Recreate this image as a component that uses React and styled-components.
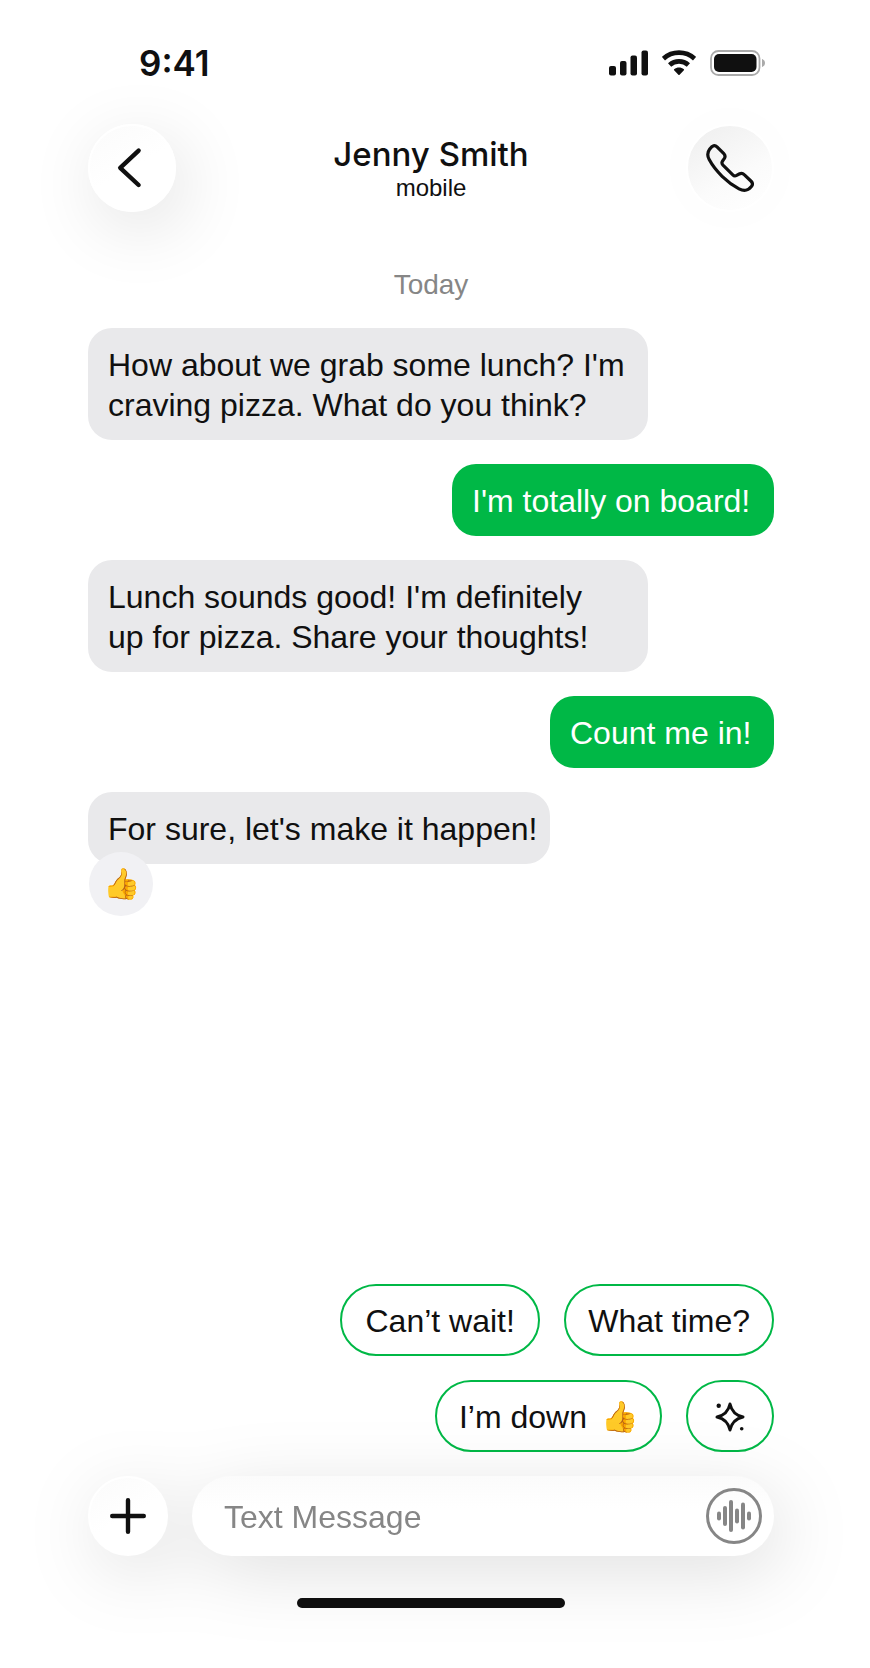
import React from 'react';
import styled, { createGlobalStyle } from 'styled-components';

const ink = '#101010';
const green = '#00b846';
const grey = '#868686';

const GlobalStyle = createGlobalStyle`
  * { box-sizing: border-box; }
  body {
    margin: 0;
    background: #fff;
    color: ${ink};
    font-family: "Liberation Sans", Arial, sans-serif;
    font-size: 32px;
    line-height: 40px;
  }
  button, input { font: inherit; color: inherit; }
  button { padding: 0; border: 0; background: none; cursor: pointer; }
  svg { display: block; }
`;

const Screen = styled.div`
  display: flex;
  flex-direction: column;
  min-height: 100vh;
  padding: 40px 96px 60px 88px;
  overflow: hidden;
`;

const StatusBar = styled.div`
  display: flex;
  align-items: center;
  justify-content: space-between;
  height: 48px;
  padding: 0 8px 2px 51px;
`;

const Time = styled.time`
  font-family: Inter, sans-serif;
  font-size: 35px;
  font-weight: 600;
`;

const StatusIcons = styled.div`
  display: flex;
  align-items: center;
  gap: 14px;
`;

const Header = styled.header`
  display: flex;
  align-items: center;
  justify-content: space-between;
  margin-top: 36px;
`;

const RoundButton = styled.button`
  display: flex;
  flex: none;
  align-items: center;
  justify-content: center;
  width: ${(p) => p.$size}px;
  height: ${(p) => p.$size}px;
  border: 2px solid #fff;
  border-radius: 50%;
  background: linear-gradient(150deg, #fbfbfb, #fff 50%);
`;

const BackButton = styled(RoundButton)`
  box-shadow: 8px 16px 72px rgba(0, 0, 0, 0.12);
`;

const CallButton = styled(RoundButton)`
  background: linear-gradient(150deg, #eee, #fbfbfb 60%, #fff);
  box-shadow: 0 0 60px rgba(0, 0, 0, 0.02);
`;

const Contact = styled.div`
  padding-top: 4px;
  text-align: center;
`;

const ContactName = styled.h1`
  margin: 0;
  font-family: Inter, sans-serif;
  font-size: 33px;
  font-weight: 500;
  line-height: 36px;
`;

const ContactLabel = styled.p`
  margin: 0;
  font-size: 24px;
  line-height: 32px;
`;

const Thread = styled.main`
  display: flex;
  flex-direction: column;
  align-items: flex-start;
  gap: 24px;
  margin-top: 56px;
`;

const Day = styled.p`
  align-self: center;
  margin: 0;
  padding-bottom: 2px;
  color: ${grey};
  font-size: 28px;
  line-height: 34px;
`;

const Bubble = styled.div`
  position: relative;
  align-self: ${(p) => (p.$sent ? 'flex-end' : 'flex-start')};
  width: ${(p) => p.$width}px;
  padding: 17px 20px 15px;
  border-radius: 24px;
  background: ${(p) => (p.$sent ? green : '#e9e9eb')};
  color: ${(p) => (p.$sent ? '#fff' : ink)};
  white-space: pre;
`;

const Reaction = styled.span`
  position: absolute;
  top: 60px;
  left: 1px;
  display: flex;
  align-items: center;
  justify-content: center;
  width: 64px;
  height: 64px;
  border-radius: 50%;
  background: #f1f1f4;
  font-size: 30px;
`;

const Suggestions = styled.div`
  display: flex;
  flex-wrap: wrap;
  align-self: flex-end;
  justify-content: flex-end;
  gap: 24px;
  max-width: 480px;
  margin-top: auto;
  padding-top: 80px;
`;

const Chip = styled.button`
  display: flex;
  align-items: center;
  justify-content: center;
  gap: 14px;
  min-width: ${(p) => (p.$icon ? 88 : 200)}px;
  height: 72px;
  padding: 2px 22px 0;
  border: 2px solid ${green};
  border-radius: 36px;
`;

const ChipEmoji = styled.span`
  font-size: 30px;
`;

const Composer = styled.form`
  display: flex;
  gap: 24px;
  margin-top: 24px;
  filter: drop-shadow(8px 16px 36px rgba(0, 0, 0, 0.12));
`;

const MessageField = styled.div`
  display: flex;
  flex: 1;
  align-items: center;
  min-width: 0;
  height: 80px;
  padding: 0 12px 0 32px;
  border-radius: 40px;
  background: linear-gradient(#fbfbfb, #fff 40%);
`;

const MessageInput = styled.input`
  flex: 1;
  min-width: 0;
  padding: 2px 0 0;
  border: 0;
  outline: 0;
  background: none;
  &::placeholder { color: ${grey}; opacity: 1; }
`;

const VoiceButton = styled.button`
  flex: none;
`;

const HomeIndicator = styled.div`
  align-self: center;
  width: 268px;
  height: 10px;
  margin-top: 42px;
  border-radius: 5px;
  background: ${ink};
`;

const SignalIcon = () => (
  <svg width="39" height="26" viewBox="0 0 39 26" fill={ink} aria-hidden="true">
    <rect x="0" y="16" width="7" height="9.5" rx="2" />
    <rect x="11" y="11" width="6.5" height="14.5" rx="2" />
    <rect x="21.5" y="5.5" width="6.5" height="20" rx="2" />
    <rect x="32.5" y="0.5" width="6.5" height="25" rx="2" />
  </svg>
);

const WifiIcon = () => (
  <svg width="34" height="26" viewBox="0 0 34 26" aria-hidden="true">
    <g fill="none" stroke={ink} strokeWidth="4.8">
      <path d="M1.4 8.6C10.2 .6 23.8 .6 32.6 8.6" />
      <path d="M7.6 15C13 10.2 21 10.2 26.4 15" />
    </g>
    <path fill={ink} d="M12.1 19.3C14.9 17 19.1 17 21.9 19.3C22.2 19.6 22.2 19.9 21.9 20.2L17.6 24.7C17.2 25.1 16.8 25.1 16.4 24.7L12.1 20.2C11.8 19.9 11.8 19.6 12.1 19.3Z" />
  </svg>
);

const BatteryIcon = () => (
  <svg width="56" height="26" viewBox="0 0 56 26" aria-hidden="true">
    <rect x="1" y="1" width="48.5" height="24" rx="7.5" fill="none" stroke="#aaa" strokeWidth="1.8" />
    <rect x="4" y="4" width="42.5" height="18" rx="5" fill={ink} />
    <path d="M52 9C54 9.7 55 11.2 55 13S54 16.3 52 17Z" fill="#aaa" />
  </svg>
);

const BackIcon = () => (
  <svg width="44" height="44" viewBox="0 0 44 44" fill="none" stroke={ink} strokeWidth="4.4" strokeLinecap="round" strokeLinejoin="round" aria-hidden="true">
    <path d="M28.6 4.6 10.2 21.8l18.4 17.2" />
  </svg>
);

const PhoneIcon = () => (
  <svg width="48" height="48" viewBox="0 0 48 48" fill="none" stroke={ink} strokeWidth="3.2" strokeLinejoin="round" aria-hidden="true">
    <path d="M3.6 5.2C6.5 1.3 8.8.7 11 2.9L17.6 9.4C19.4 11.2 19.5 12.6 18.4 14.4L16.4 17.2C15.6 18.6 15.7 19.8 17 21.2L26.8 30.8C28.1 32.1 29 32.2 30.6 31.4L33.2 30C35.2 28.9 36.6 29 38.2 30.6L44.9 37C47 39 47 40.6 45.4 42.6C41.6 47.2 38 47.4 33 44.8C21.5 38.8 9.4 27.2 3.2 15.6C1.1 11.6 1.2 8.4 3.6 5.2Z" />
  </svg>
);

const SparkleIcon = () => (
  <svg width="30" height="30" viewBox="0 0 30 30" fill={ink} aria-hidden="true">
    <path d="M15 2C16.6 9.4 20.6 13.4 28 15C20.6 16.6 16.6 20.6 15 28C13.4 20.6 9.4 16.6 2 15C9.4 13.4 13.4 9.4 15 2Z" fill="none" stroke={ink} strokeWidth="3" strokeLinejoin="round" />
    <circle cx="3.7" cy="3.7" r="2.2" />
    <circle cx="26.7" cy="26.7" r="1.8" />
  </svg>
);

const PlusIcon = () => (
  <svg width="36" height="36" viewBox="0 0 36 36" fill="none" stroke={ink} strokeWidth="4.4" strokeLinecap="round" aria-hidden="true">
    <path d="M18 2.2v31.6M2.2 18h31.6" />
  </svg>
);

const waveBars = [9, 20, 32, 15, 27, 9];

const VoiceIcon = () => (
  <svg width="56" height="56" viewBox="0 0 56 56" aria-hidden="true">
    <circle cx="28" cy="28" r="26.5" fill="none" stroke={grey} strokeWidth="3" />
    {waveBars.map((height, i) => (
      <rect key={i} x={11 + i * 6} y={28 - height / 2} width="4" height={height} rx="2" fill={grey} />
    ))}
  </svg>
);

const messages = [
  { text: "How about we grab some lunch? I'm\ncraving pizza. What do you think?", width: 560 },
  { text: "I'm totally on board!", sent: true, width: 322 },
  { text: "Lunch sounds good! I'm definitely\nup for pizza. Share your thoughts!", width: 560 },
  { text: 'Count me in!', sent: true, width: 224 },
  { text: "For sure, let's make it happen!", reaction: '👍', width: 462 },
];

export default function App() {
  return (
    <Screen>
      <GlobalStyle />
      <StatusBar>
        <Time>9:41</Time>
        <StatusIcons>
          <SignalIcon />
          <WifiIcon />
          <BatteryIcon />
        </StatusIcons>
      </StatusBar>
      <Header>
        <BackButton type="button" $size={88} aria-label="Back"><BackIcon /></BackButton>
        <Contact>
          <ContactName>Jenny Smith</ContactName>
          <ContactLabel>mobile</ContactLabel>
        </Contact>
        <CallButton type="button" $size={88} aria-label="Call"><PhoneIcon /></CallButton>
      </Header>
      <Thread>
        <Day>Today</Day>
        {messages.map((m) => (
          <Bubble key={m.text} $sent={m.sent} $width={m.width}>
            {m.text}
            {m.reaction && <Reaction>{m.reaction}</Reaction>}
          </Bubble>
        ))}
      </Thread>
      <Suggestions>
        <Chip type="button">Can’t wait!</Chip>
        <Chip type="button">What time?</Chip>
        <Chip type="button">I’m down <ChipEmoji>👍</ChipEmoji></Chip>
        <Chip type="button" $icon aria-label="More suggestions"><SparkleIcon /></Chip>
      </Suggestions>
      <Composer>
        <RoundButton type="button" $size={80} aria-label="Add attachment"><PlusIcon /></RoundButton>
        <MessageField>
          <MessageInput type="text" placeholder="Text Message" aria-label="Text Message" />
          <VoiceButton type="button" aria-label="Record voice message"><VoiceIcon /></VoiceButton>
        </MessageField>
      </Composer>
      <HomeIndicator />
    </Screen>
  );
}
